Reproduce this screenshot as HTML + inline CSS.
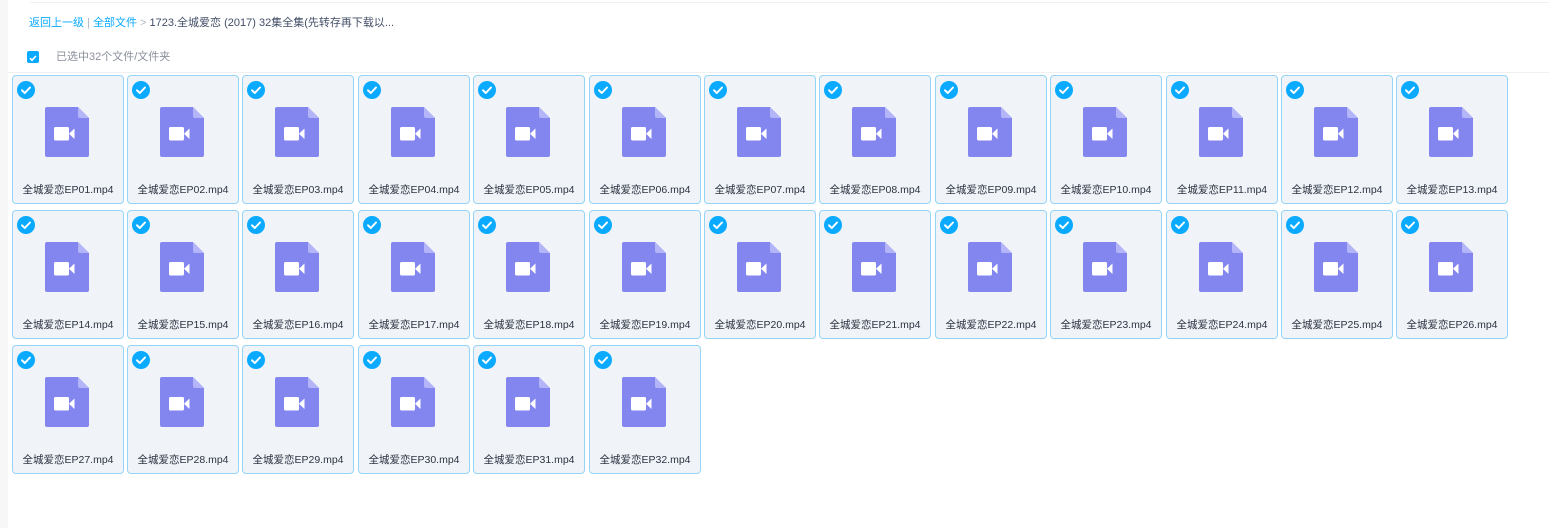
<!DOCTYPE html>
<html><head><meta charset="utf-8"><style>
*{margin:0;padding:0;box-sizing:border-box}
body{width:1549px;height:528px;background:#fff;font-family:"Liberation Sans","Noto Sans CJK SC",sans-serif;position:relative;overflow:hidden}
.side{position:absolute;left:0;top:0;width:8px;height:528px;background:#f7f7f8}
.topline{position:absolute;left:30px;right:0;top:2px;height:1px;background:#eef0f3}
.bc{position:absolute;left:29px;top:14px;font-size:11px;color:#424e67;white-space:nowrap}
.bc a{color:#09aaff;text-decoration:none}
.bc .g{color:#b0b5c0}
.cb{position:absolute;left:27px;top:51px;width:12px;height:12px;background:#09aaff;border-radius:2px}
.sel{position:absolute;left:56px;top:48px;font-size:11px;color:#8a8f9c}
.hline{position:absolute;left:8px;right:0;top:72px;height:1px;background:#f0f0f0}
.card{position:absolute;width:112px;height:129px;background:#f0f4f9;border:1px solid #94d5f7;border-radius:4px}
.card .ck{position:absolute;left:4px;top:5px;width:18px;height:18px}
.card .ic{position:absolute;left:32px;top:31px;width:44px;height:50px}
.card .n{position:absolute;left:0;right:0;top:106px;text-align:center;font-size:10.5px;color:#2c3340;white-space:nowrap}
</style></head><body>
<svg width="0" height="0" style="position:absolute">
<defs>
<symbol id="ck" viewBox="0 0 18 18"><circle cx="9" cy="9" r="9" fill="#09aaff"/><path d="M5 9.3l2.8 2.7L13 6.5" stroke="#fff" stroke-width="2" fill="none" stroke-linecap="round" stroke-linejoin="round"/></symbol>
<symbol id="ic" viewBox="0 0 44 50"><path d="M2 0H33L44 11V48a2 2 0 0 1-2 2H2a2 2 0 0 1-2-2V2a2 2 0 0 1 2-2z" fill="#8486f0"/><path d="M33 0L44 11H35a2 2 0 0 1-2-2z" fill="#b3b5f8"/><rect x="9" y="20" width="15" height="13.5" rx="1.5" fill="#fff"/><path d="M24 26.7L29.5 21.5V32z" fill="#fff"/></symbol>
</defs></svg>
<div class="side"></div><div class="topline"></div>
<div class="bc"><a>返回上一级</a><span class="g"> | </span><a>全部文件</a><span class="g"> &gt; </span>1723.全城爱恋 (2017) 32集全集(先转存再下载以...</div>
<div class="cb"><svg width="12" height="12" viewBox="0 0 12 12"><path d="M3 6.2l2 2L9 4" stroke="#fff" stroke-width="1.6" fill="none"/></svg></div>
<div class="sel">已选中32个文件/文件夹</div>
<div class="hline"></div>

<div class="card" style="left:12px;top:75px"><svg class="ck"><use href="#ck"/></svg><svg class="ic"><use href="#ic"/></svg><div class="n">全城爱恋EP01.mp4</div></div>
<div class="card" style="left:127px;top:75px"><svg class="ck"><use href="#ck"/></svg><svg class="ic"><use href="#ic"/></svg><div class="n">全城爱恋EP02.mp4</div></div>
<div class="card" style="left:242px;top:75px"><svg class="ck"><use href="#ck"/></svg><svg class="ic"><use href="#ic"/></svg><div class="n">全城爱恋EP03.mp4</div></div>
<div class="card" style="left:358px;top:75px"><svg class="ck"><use href="#ck"/></svg><svg class="ic"><use href="#ic"/></svg><div class="n">全城爱恋EP04.mp4</div></div>
<div class="card" style="left:473px;top:75px"><svg class="ck"><use href="#ck"/></svg><svg class="ic"><use href="#ic"/></svg><div class="n">全城爱恋EP05.mp4</div></div>
<div class="card" style="left:589px;top:75px"><svg class="ck"><use href="#ck"/></svg><svg class="ic"><use href="#ic"/></svg><div class="n">全城爱恋EP06.mp4</div></div>
<div class="card" style="left:704px;top:75px"><svg class="ck"><use href="#ck"/></svg><svg class="ic"><use href="#ic"/></svg><div class="n">全城爱恋EP07.mp4</div></div>
<div class="card" style="left:819px;top:75px"><svg class="ck"><use href="#ck"/></svg><svg class="ic"><use href="#ic"/></svg><div class="n">全城爱恋EP08.mp4</div></div>
<div class="card" style="left:935px;top:75px"><svg class="ck"><use href="#ck"/></svg><svg class="ic"><use href="#ic"/></svg><div class="n">全城爱恋EP09.mp4</div></div>
<div class="card" style="left:1050px;top:75px"><svg class="ck"><use href="#ck"/></svg><svg class="ic"><use href="#ic"/></svg><div class="n">全城爱恋EP10.mp4</div></div>
<div class="card" style="left:1166px;top:75px"><svg class="ck"><use href="#ck"/></svg><svg class="ic"><use href="#ic"/></svg><div class="n">全城爱恋EP11.mp4</div></div>
<div class="card" style="left:1281px;top:75px"><svg class="ck"><use href="#ck"/></svg><svg class="ic"><use href="#ic"/></svg><div class="n">全城爱恋EP12.mp4</div></div>
<div class="card" style="left:1396px;top:75px"><svg class="ck"><use href="#ck"/></svg><svg class="ic"><use href="#ic"/></svg><div class="n">全城爱恋EP13.mp4</div></div>

<div class="card" style="left:12px;top:210px"><svg class="ck"><use href="#ck"/></svg><svg class="ic"><use href="#ic"/></svg><div class="n">全城爱恋EP14.mp4</div></div>
<div class="card" style="left:127px;top:210px"><svg class="ck"><use href="#ck"/></svg><svg class="ic"><use href="#ic"/></svg><div class="n">全城爱恋EP15.mp4</div></div>
<div class="card" style="left:242px;top:210px"><svg class="ck"><use href="#ck"/></svg><svg class="ic"><use href="#ic"/></svg><div class="n">全城爱恋EP16.mp4</div></div>
<div class="card" style="left:358px;top:210px"><svg class="ck"><use href="#ck"/></svg><svg class="ic"><use href="#ic"/></svg><div class="n">全城爱恋EP17.mp4</div></div>
<div class="card" style="left:473px;top:210px"><svg class="ck"><use href="#ck"/></svg><svg class="ic"><use href="#ic"/></svg><div class="n">全城爱恋EP18.mp4</div></div>
<div class="card" style="left:589px;top:210px"><svg class="ck"><use href="#ck"/></svg><svg class="ic"><use href="#ic"/></svg><div class="n">全城爱恋EP19.mp4</div></div>
<div class="card" style="left:704px;top:210px"><svg class="ck"><use href="#ck"/></svg><svg class="ic"><use href="#ic"/></svg><div class="n">全城爱恋EP20.mp4</div></div>
<div class="card" style="left:819px;top:210px"><svg class="ck"><use href="#ck"/></svg><svg class="ic"><use href="#ic"/></svg><div class="n">全城爱恋EP21.mp4</div></div>
<div class="card" style="left:935px;top:210px"><svg class="ck"><use href="#ck"/></svg><svg class="ic"><use href="#ic"/></svg><div class="n">全城爱恋EP22.mp4</div></div>
<div class="card" style="left:1050px;top:210px"><svg class="ck"><use href="#ck"/></svg><svg class="ic"><use href="#ic"/></svg><div class="n">全城爱恋EP23.mp4</div></div>
<div class="card" style="left:1166px;top:210px"><svg class="ck"><use href="#ck"/></svg><svg class="ic"><use href="#ic"/></svg><div class="n">全城爱恋EP24.mp4</div></div>
<div class="card" style="left:1281px;top:210px"><svg class="ck"><use href="#ck"/></svg><svg class="ic"><use href="#ic"/></svg><div class="n">全城爱恋EP25.mp4</div></div>
<div class="card" style="left:1396px;top:210px"><svg class="ck"><use href="#ck"/></svg><svg class="ic"><use href="#ic"/></svg><div class="n">全城爱恋EP26.mp4</div></div>

<div class="card" style="left:12px;top:345px"><svg class="ck"><use href="#ck"/></svg><svg class="ic"><use href="#ic"/></svg><div class="n">全城爱恋EP27.mp4</div></div>
<div class="card" style="left:127px;top:345px"><svg class="ck"><use href="#ck"/></svg><svg class="ic"><use href="#ic"/></svg><div class="n">全城爱恋EP28.mp4</div></div>
<div class="card" style="left:242px;top:345px"><svg class="ck"><use href="#ck"/></svg><svg class="ic"><use href="#ic"/></svg><div class="n">全城爱恋EP29.mp4</div></div>
<div class="card" style="left:358px;top:345px"><svg class="ck"><use href="#ck"/></svg><svg class="ic"><use href="#ic"/></svg><div class="n">全城爱恋EP30.mp4</div></div>
<div class="card" style="left:473px;top:345px"><svg class="ck"><use href="#ck"/></svg><svg class="ic"><use href="#ic"/></svg><div class="n">全城爱恋EP31.mp4</div></div>
<div class="card" style="left:589px;top:345px"><svg class="ck"><use href="#ck"/></svg><svg class="ic"><use href="#ic"/></svg><div class="n">全城爱恋EP32.mp4</div></div>
</body></html>
